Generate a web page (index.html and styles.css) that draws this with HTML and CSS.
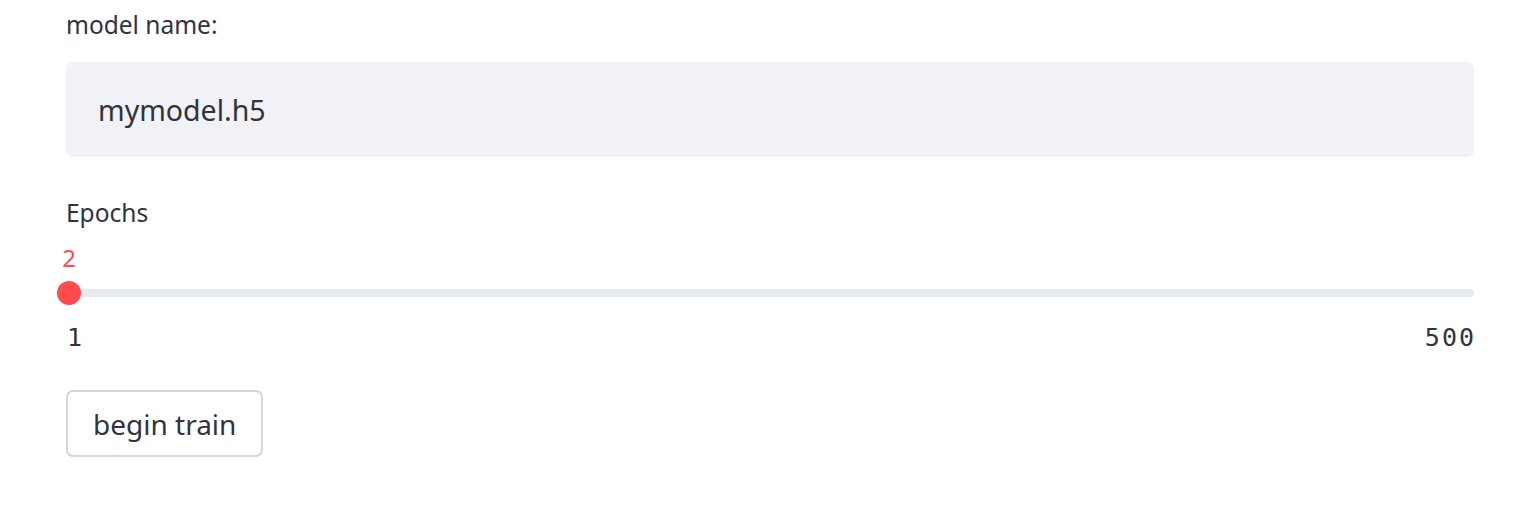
FILE: index.html
```html
<!DOCTYPE html>
<html>
<head>
    <meta charset="utf-8" />
    <title>train</title>
    <link rel="stylesheet" href="styles.css">
</head>
<body>
    <div class="main">
        <div class="field">
            <label class="label">model name:</label>
            <div class="input">mymodel.h5</div>
        </div>

        <div class="field slider-field">
            <label class="label">Epochs</label>
            <div class="slider">
                <div class="value">2</div>
                <div class="track">
                    <span class="thumb"></span>
                </div>
                <div class="ticks">
                    <span>1</span>
                    <span>500</span>
                </div>
            </div>
        </div>

        <button class="btn">begin train</button>
    </div>
</body>
</html>
```

FILE: styles.css
```css
body {
    margin: 0;
    padding: 0;
    background: #fff;
    color: #31333f;
    font-family: "Noto Sans", "Open Sans", sans-serif;
}

.main {
    width: 1408px;
    margin-left: 66px;
    padding-top: 8px;
}

.label {
    display: block;
    font-size: 24.5px;
    line-height: 34px;
    height: 34px;
}

.input {
    margin-top: 20px;
    height: 95px;
    box-sizing: border-box;
    background: #f0f2f6;
    border-radius: 7px;
    padding: 0 32px;
    font-size: 28.5px;
    line-height: 97px;
}

.slider-field {
    margin-top: 39px;
}

.value {
    width: 24px;
    margin-left: -9px;
    margin-top: 14px;
    text-align: center;
    color: #ff4b4b;
    font-size: 24px;
    line-height: 28px;
    height: 28px;
}

.track {
    position: relative;
    height: 8px;
    margin-top: 17px;
    background: #e6eaf1;
    border-radius: 4px;
}

.thumb {
    position: absolute;
    left: -9px;
    top: -8px;
    width: 24px;
    height: 24px;
    border-radius: 50%;
    background: #ff4b4b;
}

.ticks {
    display: flex;
    justify-content: space-between;
    margin-top: 27px;
    font-family: "DejaVu Sans Mono", "Liberation Mono", monospace;
    font-size: 25px;
    letter-spacing: 2px;
    line-height: 28px;
    height: 28px;
}

.ticks span:first-child {
    padding-left: 1px;
}

.ticks span:last-child {
    margin-right: -2px;
}

.btn {
    display: block;
    margin-top: 38px;
    height: 67px;
    padding: 0 25px;
    white-space: nowrap;
    background: #fff;
    border: 2px solid #d6d6d9;
    border-radius: 7px;
    color: #31333f;
    font-family: "Noto Sans", "Open Sans", sans-serif;
    font-size: 28px;
}
```
